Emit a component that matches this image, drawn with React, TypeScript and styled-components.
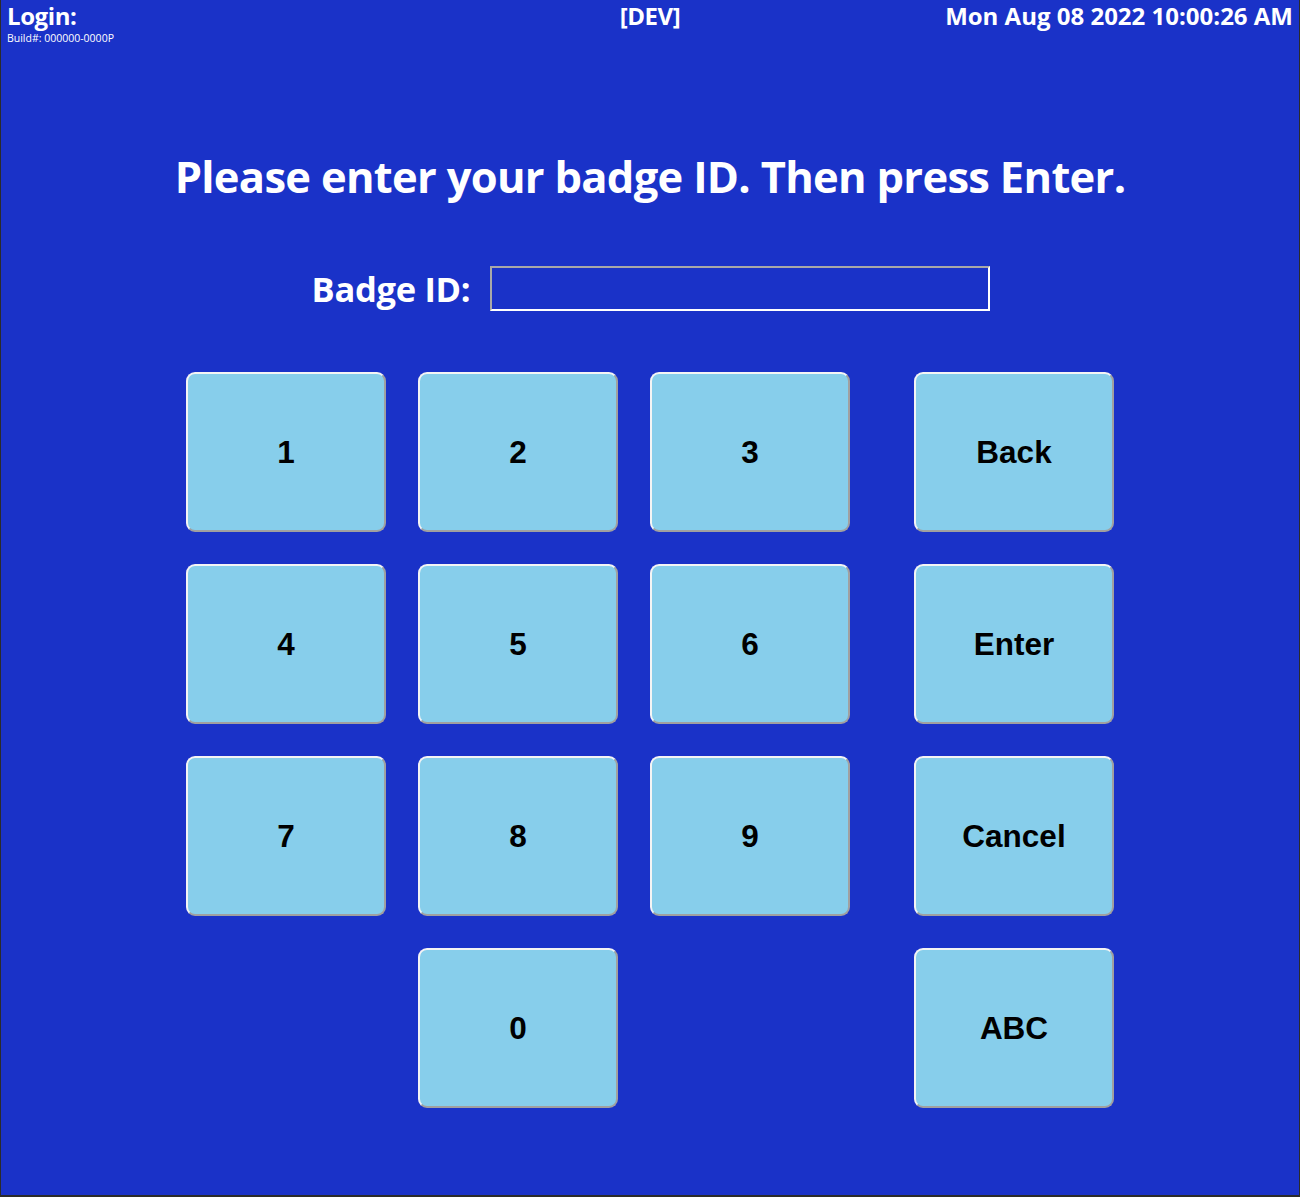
import React from "react";
import styled, { createGlobalStyle } from "styled-components";

const GlobalStyle = createGlobalStyle`
  html, body {
    margin: 0;
    padding: 0;
    background: #1a32c8;
  }
`;

type Key = { label: string; col: number; row: number };

const keys: Key[] = [
  { label: "1", col: 1, row: 1 },
  { label: "2", col: 2, row: 1 },
  { label: "3", col: 3, row: 1 },
  { label: "Back", col: 4, row: 1 },
  { label: "4", col: 1, row: 2 },
  { label: "5", col: 2, row: 2 },
  { label: "6", col: 3, row: 2 },
  { label: "Enter", col: 4, row: 2 },
  { label: "7", col: 1, row: 3 },
  { label: "8", col: 2, row: 3 },
  { label: "9", col: 3, row: 3 },
  { label: "Cancel", col: 4, row: 3 },
  { label: "0", col: 2, row: 4 },
  { label: "ABC", col: 4, row: 4 },
];

const App = () => {
  return (
    <>
      <GlobalStyle />
      <Screen>
        <Header>
          <TitleBlock>
            <HeadText>Login:</HeadText>
            <Build>Build#: 000000-0000P</Build>
          </TitleBlock>
          <Env>[DEV]</Env>
          <Clock>Mon Aug 08 2022 10:00:26 AM</Clock>
        </Header>

        <Prompt>Please enter your badge ID. Then press Enter.</Prompt>

        <BadgeRow>
          <BadgeLabel>Badge ID:</BadgeLabel>
          <BadgeInput type="text" />
        </BadgeRow>

        <Keypad>
          {keys.map((k) => (
            <KeyButton key={k.label} $col={k.col} $row={k.row}>
              {k.label}
            </KeyButton>
          ))}
        </Keypad>
      </Screen>
    </>
  );
};

export default App;

const Screen = styled.div`
  box-sizing: border-box;
  width: 1300px;
  height: 1197px;
  background: #1a32c8;
  border-left: 1px solid #2b2b2b;
  border-right: 1px solid #2b2b2b;
  border-bottom: 2px solid #2b2b2b;
  display: flex;
  flex-direction: column;
  align-items: center;
  font-family: "Open Sans", "Noto Sans", sans-serif;
  color: #fff;
`;

const Header = styled.div`
  width: 100%;
  box-sizing: border-box;
  display: flex;
  justify-content: space-between;
  align-items: flex-start;
  padding: 2px 6px 0 6px;
  position: relative;
`;

const TitleBlock = styled.div`
  display: flex;
  flex-direction: column;
`;

const HeadText = styled.div`
  font-size: 24px;
  font-weight: 700;
  line-height: 28px;
  letter-spacing: -0.4px;
`;

const Build = styled.div`
  font-size: 10.5px;
  line-height: 14px;
  margin-top: 1px;
`;

const Env = styled(HeadText)`
  position: absolute;
  left: 0;
  right: 0;
  text-align: center;
`;

const Clock = styled(HeadText)`
  letter-spacing: 0;
`;

const Prompt = styled.h1`
  margin: 104px 0 0 0;
  font-size: 43.5px;
  font-weight: 700;
  line-height: 56px;
  letter-spacing: -0.7px;
`;

const BadgeRow = styled.div`
  display: flex;
  align-items: center;
  gap: 20px;
  margin-top: 60px;
  margin-left: 2px;
`;

const BadgeLabel = styled.div`
  font-size: 34.5px;
  font-weight: 700;
  letter-spacing: -0.3px;
`;

const BadgeInput = styled.input`
  box-sizing: border-box;
  width: 500px;
  height: 45px;
  background: transparent;
  border: 2px solid;
  border-color: #a8a8a8 #ffffff #ffffff #a8a8a8;
  outline: none;
  color: #fff;
`;

const Keypad = styled.div`
  display: grid;
  grid-template-columns: 200px 200px 200px 232px;
  grid-auto-rows: 160px;
  gap: 32px;
  margin-top: 60px;
`;

const KeyButton = styled.button<{ $col: number; $row: number }>`
  grid-column: ${(p) => p.$col};
  grid-row: ${(p) => p.$row};
  justify-self: end;
  box-sizing: border-box;
  width: 200px;
  height: 160px;
  background: #87ceeb;
  border: 2px solid;
  border-color: #f4f4f4 #a0a0a0 #a0a0a0 #f4f4f4;
  border-radius: 9px;
  font-family: "Liberation Sans", Arial, sans-serif;
  font-size: 31.5px;
  font-weight: 700;
  color: #000;
  cursor: pointer;
  padding: 0;
`;
